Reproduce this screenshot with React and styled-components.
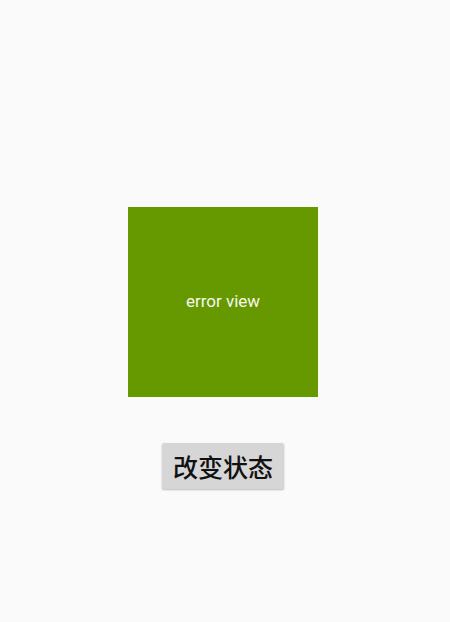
import React from "react"
import styled, { createGlobalStyle } from "styled-components"

const GlobalStyle = createGlobalStyle`
  body {
    margin: 0;
    background: #fafafa;
    font-family: Roboto, "Noto Sans CJK SC", sans-serif;
  }
`

const Screen = styled.div`
  display: flex;
  flex-direction: column;
  align-items: center;
  width: 446px;
  height: 622px;
  padding-top: 207px;
  box-sizing: border-box;
`

const StateView = styled.div`
  display: flex;
  align-items: center;
  justify-content: center;
  width: 190px;
  height: 190px;
  background: #669900;
  color: #f4f8ee;
  font-size: 17px;
  padding-bottom: 2px;
  box-sizing: border-box;
`

const ChangeButton = styled.button`
  margin-top: 46px;
  width: 122px;
  height: 46px;
  border: none;
  border-radius: 2px;
  background: #d6d6d6;
  box-shadow: 0 1px 2px rgba(0, 0, 0, 0.25);
  color: #111;
  font-family: "Noto Sans CJK SC", sans-serif;
  font-size: 25px;
  font-weight: 500;
  padding: 0;
`

const App = () => (
  <>
    <GlobalStyle />
    <Screen>
      <StateView>error view</StateView>
      <ChangeButton>改变状态</ChangeButton>
    </Screen>
  </>
)

export default App
